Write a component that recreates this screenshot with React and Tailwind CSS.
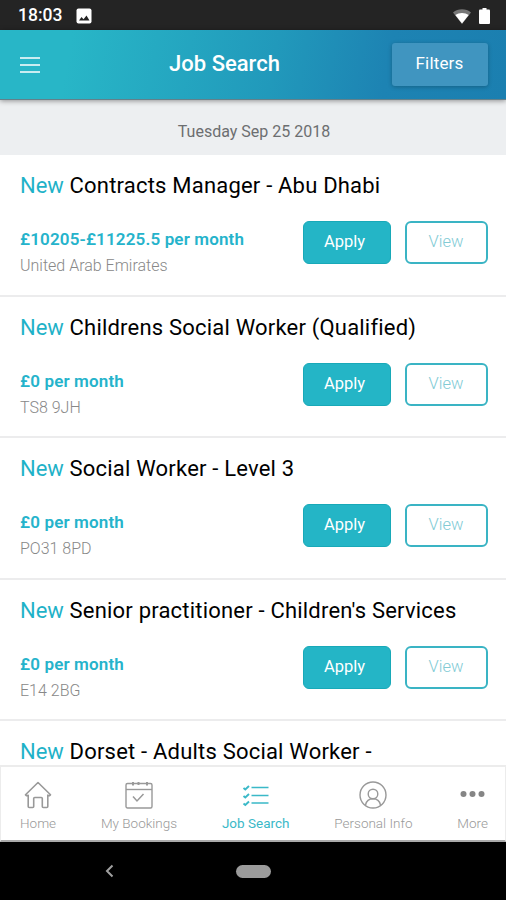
import React, { useState } from "react";

const jobs = [
  {
    id: 1,
    title: "Contracts Manager - Abu Dhabi",
    rate: "£10205-£11225.5 per month",
    location: "United Arab Emirates",
  },
  {
    id: 2,
    title: "Childrens Social Worker (Qualified)",
    rate: "£0 per month",
    location: "TS8 9JH",
  },
  {
    id: 3,
    title: "Social Worker - Level 3",
    rate: "£0 per month",
    location: "PO31 8PD",
  },
  {
    id: 4,
    title: "Senior practitioner - Children's Services",
    rate: "£0 per month",
    location: "E14 2BG",
  },
  {
    id: 5,
    title: "Dorset - Adults Social Worker -",
  },
];

const HomeIcon = () => (
  <svg width="28" height="28" viewBox="0 0 28 28" fill="none" stroke="currentColor" strokeWidth="1.6" strokeLinejoin="round">
    <path d="M1.500 13.800 14 1.500l12.500 12.300-1.200 1-1.500-.6V25.500a1 1 0 0 1-1 1H19.300a1 1 0 0 1-1-1V17.500a1 1 0 0 0-1-1h-6.600a1 1 0 0 0-1 1v8a1 1 0 0 1-1 1H5.200a1 1 0 0 1-1-1V14.200l-1.500.6z" />
  </svg>
);

const CalendarIcon = () => (
  <svg width="28" height="28" viewBox="0 0 28 28" fill="none" stroke="currentColor" strokeWidth="1.4">
    <rect x="1" y="2.500" width="26" height="24.500" rx="1.500" />
    <path d="M1 8.500h26" />
    <path d="M8 1v3.500M13.500 1v3M22 1v3.500" strokeWidth="2" />
    <path d="m8 15.500 4 4.500 6.500-7" strokeWidth="1.500" />
  </svg>
);

const ChecklistIcon = () => (
  <svg width="28" height="28" viewBox="0 0 28 28" fill="none" stroke="currentColor">
    <path d="m1.500 7 1.800 1.500L7 5M1.500 15l1.800 1.500L7 13M1.500 22.500 3.300 24 7 20.500" strokeWidth="1.900" />
    <path d="M9.500 6.500H26.500M9.500 14.500H26.500M9.500 22H26.500" strokeWidth="1.600" />
  </svg>
);

const PersonIcon = () => (
  <svg width="28" height="28" viewBox="0 0 28 28" fill="none" stroke="currentColor" strokeWidth="1.4">
    <circle cx="14" cy="14" r="13" />
    <circle cx="14" cy="13" r="4.800" />
    <path d="M6.500 24c.8-3.800 3-6.200 7.500-6.200s6.700 2.400 7.500 6.200" />
  </svg>
);

const MoreIcon = () => (
  <svg width="28" height="28" viewBox="0 0 28 28" fill="#858585">
    <circle cx="4.500" cy="13" r="3" />
    <circle cx="13.500" cy="13" r="3" />
    <circle cx="22.500" cy="13" r="3" />
  </svg>
);

const tabs = [
  { name: "Home", Icon: HomeIcon },
  { name: "My Bookings", Icon: CalendarIcon },
  { name: "Job Search", Icon: ChecklistIcon },
  { name: "Personal Info", Icon: PersonIcon },
  { name: "More", Icon: MoreIcon },
];

const StatusBar = () => (
  <div className="h-[30px] shrink-0 bg-[#242424] text-white flex items-center justify-between pl-[18px] pr-4">
    <div className="flex items-center gap-[14px] pt-[2px]">
      <span className="text-[17.5px] leading-none font-medium">18:03</span>
      <svg width="16" height="16" viewBox="0 0 16 16">
        <rect x="0.500" y="0.500" width="15" height="15" rx="2" fill="#fff" />
        <path d="M3 12.500 5.500 9l2 2.200L10.500 7.500l3 5z" fill="#242424" />
      </svg>
    </div>
    <div className="flex items-center gap-2 pt-[2px]">
      <svg width="18" height="15" viewBox="0 0 18 15">
        <path d="M0 3.500C5-.8 13-.8 18 3.500L9 15z" fill="#777" />
        <path d="M2.300 6C6 3.300 12 3.300 15.700 6L9 14.500z" fill="#fff" />
      </svg>
      <svg width="11" height="16" viewBox="0 0 11 16" fill="#fff">
        <rect x="3.500" y="0" width="4" height="3" />
        <rect x="0" y="1.500" width="11" height="14.500" rx="1" />
      </svg>
    </div>
  </div>
);

const Header = () => (
  <header className="relative z-10 h-[70px] shrink-0 bg-[linear-gradient(100deg,#28b6c7_14%,#2199bb_54%,#1d83b3_76%,#1b7fb0_100%)] border-b border-[#64808a] shadow-[0_1px_5px_rgba(0,0,0,0.4)] flex items-center justify-between pl-5 pr-[18px]">
    <button className="w-[93px] flex flex-col gap-[5px]" aria-label="Menu">
      <span className="w-5 h-[2px] bg-white/75"></span>
      <span className="w-5 h-[2px] bg-white/75"></span>
      <span className="w-5 h-[2px] bg-white/75"></span>
    </button>
    <h1 className="text-white text-[22px] leading-none font-medium pb-[2px] -ml-[56px]">Job Search</h1>
    <button className="w-24 h-[43px] rounded-[3px] bg-[#4095c0] text-white text-[17px] tracking-[0.15px] pr-px pb-px shadow-[0_1px_4px_rgba(0,0,0,0.25)]">
      Filters
    </button>
  </header>
);

const JobRow = ({ job }) => (
  <div className="h-[141.5px] shrink-0 border-b-2 border-[#ececed] px-5 pt-[17px]">
    <h2 className="text-[22px] leading-7 whitespace-nowrap tracking-[0.2px] text-black">
      <span className="text-[#1fb2c8] tracking-normal">New</span> {job.title}
    </h2>
    {job.rate && (
      <div className="flex justify-between pt-[21px] -mr-[2px]">
        <div className="pt-[5px]">
          <p className="text-[17px] leading-[27px] tracking-[0.15px] font-semibold text-[#25b3cb]">{job.rate}</p>
          <p className="text-[16px] leading-[26px] font-light text-[#888]">{job.location}</p>
        </div>
        <div className="flex gap-[14px]">
          <button className="w-[88px] h-[43px] rounded-md bg-[#24b5c6] border border-[#18a9b8] text-white text-[16.5px] pr-[5px]">
            Apply
          </button>
          <button className="w-[83px] h-[43px] rounded-md border-2 border-[#3ab4c4] text-[#82cbd5] text-[16.5px] font-light pr-px">
            View
          </button>
        </div>
      </div>
    )}
  </div>
);

const App = () => {
  const [activeTab, setActiveTab] = useState("Job Search");

  return (
    <div className="w-full h-screen overflow-hidden bg-white flex flex-col font-[Roboto,sans-serif]">
      <StatusBar />
      <Header />

      {/* Date heading */}
      <div className="h-[55px] shrink-0 bg-[#edeff1] flex items-center justify-center pt-[9px] pl-[2px] text-[16px] text-[#6c6e70]">
        Tuesday Sep 25 2018
      </div>

      {/* Job list */}
      <main className="flex-1 min-h-0 overflow-hidden flex flex-col">
        {jobs.map((job) => (
          <JobRow key={job.id} job={job} />
        ))}
      </main>

      {/* Bottom tabs */}
      <nav className="h-[77px] shrink-0 bg-white border-x border-t-2 border-[#ececec] border-b-2 border-b-[#aaa] flex justify-between pl-[19px] pr-[17px] pt-[14px]">
        {tabs.map(({ name, Icon }) => (
          <button
            key={name}
            onClick={() => setActiveTab(name)}
            className={`flex flex-col items-center gap-1 ${
              activeTab === name ? "text-[#3ab9c8]" : "text-[#999]"
            }`}
          >
            <Icon />
            <span className={`text-[13.5px] leading-5 ${activeTab === name ? "" : "font-light"}`}>
              {name}
            </span>
          </button>
        ))}
      </nav>

      {/* System navigation */}
      <div className="h-[58px] shrink-0 bg-black grid grid-cols-[1fr_auto_1fr] items-center">
        <svg className="ml-[105px]" width="9" height="14" viewBox="0 0 9 14" fill="none" stroke="#a0a0a0" strokeWidth="2">
          <path d="M7.500 1.500 2 7l5.500 5.500" />
        </svg>
        <div className="w-[35px] h-[13px] rounded-full bg-[#9b9b9b]"></div>
      </div>
    </div>
  );
};

export default App;
